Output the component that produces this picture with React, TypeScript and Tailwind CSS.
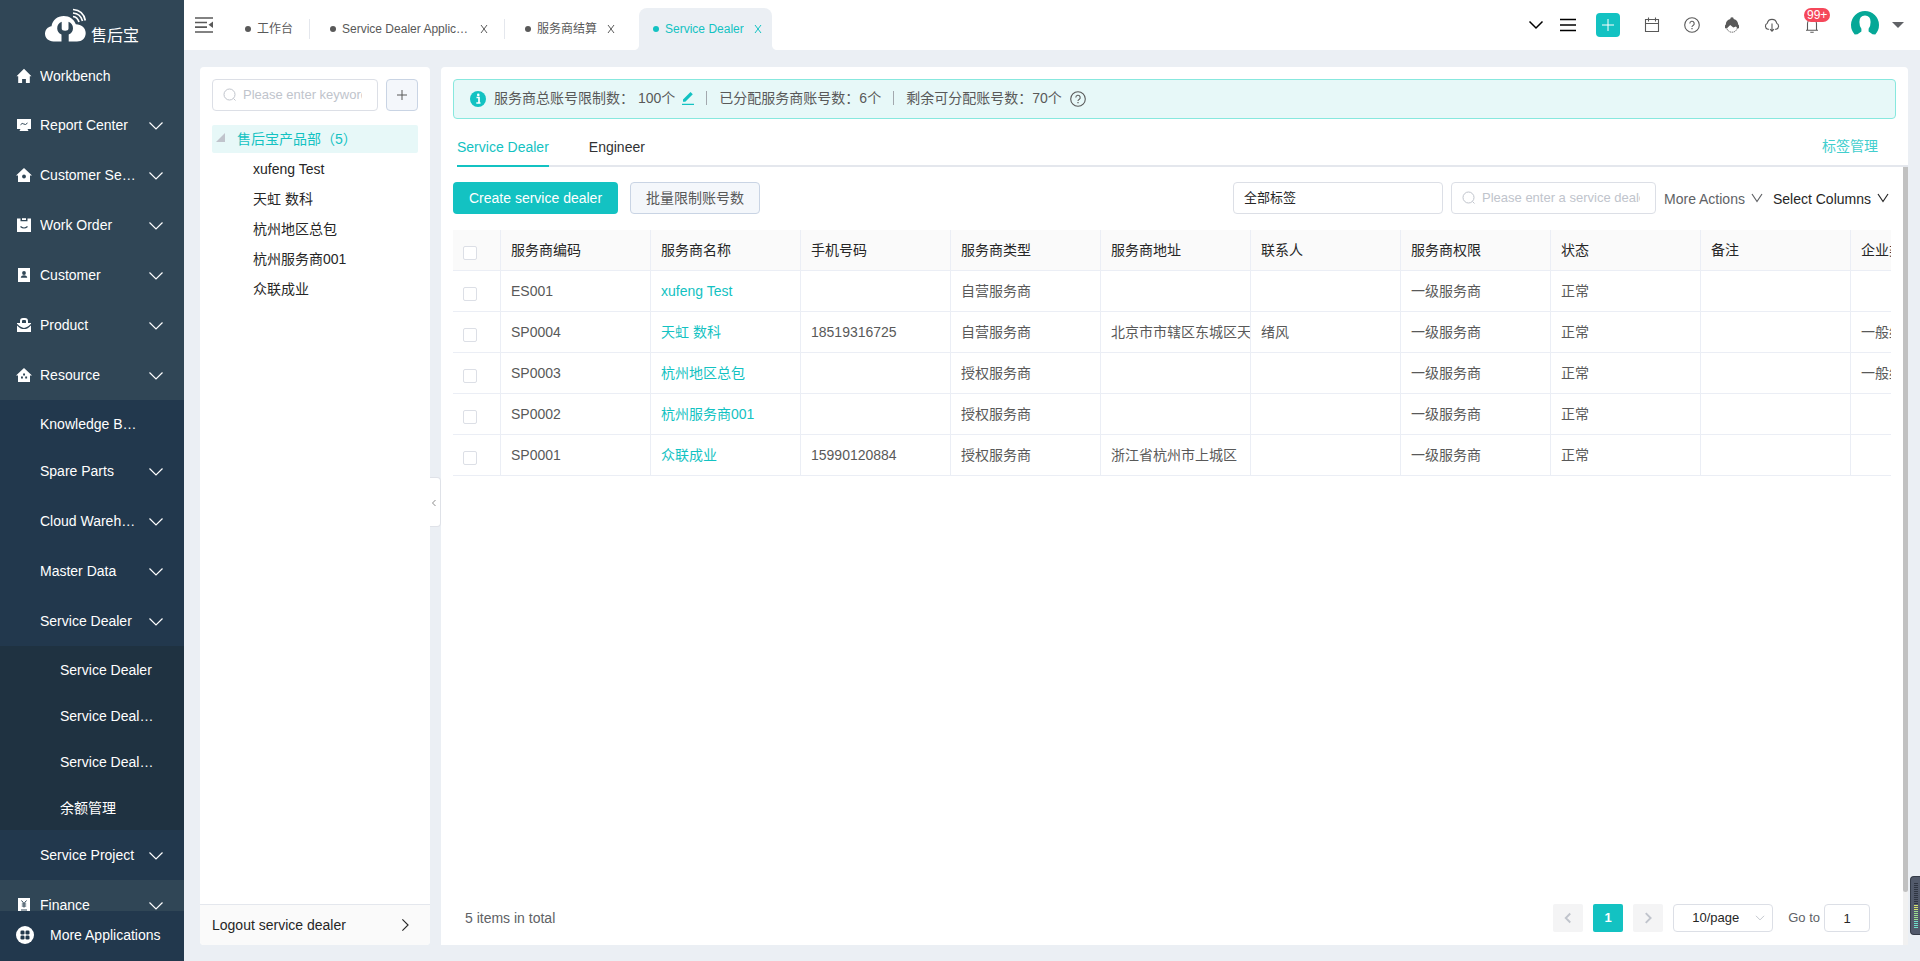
import React, { useState } from "react";

function Chevron({ dir = "down", className = "" }: { dir?: "down" | "left" | "right"; className?: string }) {
  const d = { down: "M1.5 4.5 8 11l6.5-6.5", left: "M11 2 5 8l6 6", right: "M5 1.500l6.500 6.500L5 14.500" }[dir];
  return (
    <svg viewBox="0 0 16 16" className={className} fill="none" stroke="currentColor" aria-hidden="true">
      <path d={d} />
    </svg>
  );
}

function Vee() {
  return (
    <svg viewBox="0 0 12 10" className="mb-0.5 ml-1.5 h-2.5 w-3" fill="none" stroke="currentColor" strokeWidth="1.200" aria-hidden="true">
      <path d="M1 1l5 7.500L11 1" />
    </svg>
  );
}

function Search() {
  return (
    <svg viewBox="0 0 14 14" className="size-3.5 shrink-0 text-[#c0c4cc]" fill="none" stroke="currentColor" aria-hidden="true">
      <circle cx="6.500" cy="6.500" r="5.500" />
      <path d="m10.500 10.500 2 2" />
    </svg>
  );
}

function Help({ className = "" }: { className?: string }) {
  return (
    <svg viewBox="0 0 16 16" className={className} fill="none" stroke="currentColor" aria-hidden="true">
      <circle cx="8" cy="8" r="7.300" strokeWidth="1.100" />
      <path d="M5.800 6.500a2.200 2.200 0 1 1 3.300 1.900C8.300 8.900 8 9.200 8 10" strokeWidth="1.100" />
      <path d="M8 11.100v1.200" strokeWidth="1.200" />
    </svg>
  );
}

const sideIcons: Record<string, React.ReactNode> = {
  home: <path fill="currentColor" d="M8 .8.500 8.200h1.700V15h3.900v-4h3.800v4h3.900V8.200h1.700z" />,
  report: (
    <>
      <path fill="currentColor" d="M1 2h14v10h-3.500l1 2h-9l1-2H1z" />
      <path d="M4.500 7.800q1.700-2.300 3.300-.8T11.500 6" fill="none" stroke="#304656" />
    </>
  ),
  service: (
    <>
      <path fill="currentColor" d="M8 1 0 8.500h2V15h12V8.500h2z" />
      <circle cx="8" cy="9.500" r="1.900" fill="#304656" />
    </>
  ),
  order: (
    <>
      <path fill="currentColor" d="M1 1.500h3.500v2.700h7V1.500H15V15H1z" />
      <path fill="currentColor" d="M6 1.200h4V3H6z" />
      <path d="M4.500 9.500q3.500 3 7 0" fill="none" stroke="#304656" strokeWidth="1.200" />
    </>
  ),
  customer: (
    <>
      <path fill="currentColor" d="M2 1h12v14H2z" />
      <circle cx="8" cy="6" r="1.900" fill="#304656" />
      <path d="M4.800 10.800q0-2.500 3.200-2.500t3.200 2.500z" fill="#304656" />
    </>
  ),
  product: (
    <>
      <path fill="currentColor" d="M1 6h14v9H1z" />
      <path d="M5 6V4a2 2 0 0 1 2-2h2a2 2 0 0 1 2 2v2" fill="none" stroke="currentColor" strokeWidth="2" />
      <path d="M1 7.500q7 8 14 0" fill="none" stroke="#304656" strokeWidth="1.200" />
    </>
  ),
  resource: (
    <>
      <path fill="currentColor" d="M8 1 0 8.500h2V15h12V8.500h2z" />
      <path fill="#304656" d="M7.100 6.500h1.900v1.900H7.100zM5 9.600h1.900v1.900H5zM9.200 9.600h1.900v1.900H9.200z" />
    </>
  ),
  finance: (
    <>
      <path fill="currentColor" d="M2 1h12v15H2z" />
      <path d="m5.500 3.500 2.500 3 2.500-3M8 6.500v4M5.800 7h4.400M5.800 9h4.400M5 13h6" fill="none" stroke="#304656" />
    </>
  ),
};

function MainItem({ icon, label, leaf = false }: { icon: string; label: string; leaf?: boolean }) {
  return (
    <a href="#" className={`flex shrink-0 items-center pl-4 pr-5 ${leaf ? "h-[46px] pb-0.5" : "h-[50px]"}`}>
      <svg viewBox="0 0 16 16" className="size-4 shrink-0" aria-hidden="true">
        {sideIcons[icon]}
      </svg>
      <span className="ml-2 w-[98px] truncate">{label}</span>
      {!leaf && <Chevron className="ml-auto mt-0.5 size-4 shrink-0 stroke-[1.2]" />}
    </a>
  );
}

function SubItem({ label, leaf = false }: { label: string; leaf?: boolean }) {
  return (
    <a href="#" className={`flex items-center pl-10 pr-5 ${leaf ? "h-[46px] pt-[2px]" : "h-[50px]"}`}>
      <span className="w-[98px] truncate">{label}</span>
      {!leaf && <Chevron className="ml-auto mt-0.5 size-4 shrink-0 stroke-[1.2]" />}
    </a>
  );
}

function Sidebar() {
  return (
    <aside className="flex w-[184px] shrink-0 flex-col bg-[#304656] text-sm text-white">
      <div className="flex h-[54px] shrink-0 items-start pl-11 pt-2">
        <svg viewBox="0 0 44 34" className="h-[34px] w-11 shrink-0" fill="currentColor" role="img" aria-label="Logo">
          <path d="M9.500 33.500C4.500 33.500 1 30 1 25.800c0-4 2.700-7 6.500-7.600C8.500 12 13.500 8 19.800 8c5.700 0 10.200 3.200 12 8.200 5.700.2 9.900 3.800 9.900 8.800 0 5-3.700 8.500-8.700 8.500h-8.300v-7c2.800-1.300 4.300-3.500 4.300-6.300 0-3-1.700-5.300-4.500-6.400v6.700c0 1.300-1.300 2.300-3.400 2.300s-3.400-1-3.400-2.300v-6.700c-2.800 1.100-4.500 3.400-4.500 6.400 0 2.800 1.500 5 4.300 6.300v7z" />
          <path d="M29 8.500q4.500.5 6 5.500M29 5q7.500.5 9.500 8M29 1.500q10.500.8 12.300 11" fill="none" stroke="currentColor" strokeWidth="1.700" />
        </svg>
        <span className="ml-[3px] mt-4 text-base leading-6">售后宝</span>
      </div>
      <nav className="flex min-h-0 flex-1 flex-col overflow-hidden">
        <MainItem icon="home" label="Workbench" leaf />
        <MainItem icon="report" label="Report Center" />
        <MainItem icon="service" label="Customer Service" />
        <MainItem icon="order" label="Work Order" />
        <MainItem icon="customer" label="Customer" />
        <MainItem icon="product" label="Product" />
        <MainItem icon="resource" label="Resource" />
        <div className="shrink-0 bg-[#22384d]">
          <SubItem label="Knowledge Base" leaf />
          <SubItem label="Spare Parts" />
          <SubItem label="Cloud Warehouse" />
          <SubItem label="Master Data" />
          <SubItem label="Service Dealer" />
          <div className="bg-[#1f3241]">
            {["Service Dealer", "Service Dealer Application", "Service Dealer Settlement", "余额管理"].map((t) => (
              <a key={t} href="#" className="flex h-[46px] items-center pl-[60px] pt-[2px]">
                <span className="w-24 truncate">{t}</span>
              </a>
            ))}
          </div>
          <SubItem label="Service Project" />
        </div>
        <MainItem icon="finance" label="Finance" />
      </nav>
      <a href="#" className="flex h-[50px] shrink-0 items-center bg-[#22384d] pb-0.5 pl-4">
        <svg viewBox="0 0 18 18" className="size-[18px]" aria-hidden="true">
          <circle cx="9" cy="9" r="9" fill="#fff" />
          <g fill="#22384d">
            <rect x="4.500" y="4.500" width="4" height="4" rx="1.300" />
            <rect x="9.500" y="4.500" width="4" height="4" rx="1.300" />
            <rect x="4.500" y="9.500" width="4" height="4" rx="1.300" />
            <rect x="9.500" y="9.500" width="4" height="4" rx="1.300" />
          </g>
        </svg>
        <span className="ml-4">More Applications</span>
      </a>
    </aside>
  );
}

function Close({ label }: { label: string }) {
  return (
    <button type="button" aria-label={label} className="ml-2.5 size-2">
      <svg viewBox="0 0 8 8" className="size-2" fill="none" stroke="currentColor" aria-hidden="true">
        <path d="M1 0l6 8M7 0 1 8" />
      </svg>
    </button>
  );
}

function TabLabel({ children, wide = false }: { children: string; wide?: boolean }) {
  return (
    <a href="#" className="flex items-center">
      <span className="size-1.5 rounded-full bg-current" />
      <span className={`ml-1.5 truncate ${wide ? "w-32" : ""}`}>{children}</span>
    </a>
  );
}

function Header() {
  return (
    <header className="flex h-[50px] shrink-0 items-center bg-white text-[#595959]">
      <button type="button" aria-label="Collapse menu" className="ml-[11px]">
        <svg viewBox="0 0 18 16" className="h-4 w-[18px]" fill="none" stroke="currentColor" strokeWidth="1.700" aria-hidden="true">
          <path d="M0 1h18M0 5.500h12M0 10.200h12M0 15h18" />
          <path d="M18 4.500v6.500L13.500 7.800z" fill="currentColor" stroke="none" />
        </svg>
      </button>
      <nav className="flex h-full items-end text-xs">
        <div className="flex h-[42px] items-center pl-8 pr-4">
          <TabLabel>工作台</TabLabel>
        </div>
        <div className="flex h-[42px] items-center">
          <div className="flex h-5 items-center border-l border-[#e4e7ed] pl-5 pr-4">
            <TabLabel wide>Service Dealer Application</TabLabel>
            <Close label="Close Service Dealer Application" />
          </div>
        </div>
        <div className="flex h-[42px] items-center">
          <div className="flex h-5 items-center border-l border-[#e4e7ed] pl-5 pr-6">
            <TabLabel>服务商结算</TabLabel>
            <Close label="Close 服务商结算" />
          </div>
        </div>
        <div className="relative flex h-[42px] items-center rounded-t-lg bg-[#ebeff4] pl-3.5 pr-2.5 text-[#13c2c2]">
          <svg viewBox="0 0 4 4" className="absolute -left-1 bottom-0 size-1 text-[#ebeff4]" aria-hidden="true"><path d="M4 0v4H0q3-.5 4-4" fill="currentColor" /></svg>
          <svg viewBox="0 0 4 4" className="absolute -right-1 bottom-0 size-1 text-[#ebeff4]" aria-hidden="true"><path d="M0 0v4h4Q1 3.500 0 0" fill="currentColor" /></svg>
          <TabLabel>Service Dealer</TabLabel>
          <Close label="Close Service Dealer" />
        </div>
      </nav>
      <div className="ml-auto flex items-center pr-4">
        <button type="button" aria-label="All tabs"><Chevron className="size-4 stroke-[1.5] text-black" /></button>
        <button type="button" aria-label="Menu" className="ml-4">
          <svg viewBox="0 0 16 14" className="h-3.5 w-4" stroke="#000" strokeWidth="1.700" aria-hidden="true"><path d="M0 1.500h16M0 7h16M0 12.500h16" /></svg>
        </button>
        <button type="button" aria-label="Create" className="ml-5 flex size-6 items-center justify-center rounded bg-[#13c2c2] text-white">
          <svg viewBox="0 0 12 12" className="size-3" stroke="currentColor" aria-hidden="true"><path d="M6 0v12M0 6h12" /></svg>
        </button>
        <button type="button" aria-label="Calendar" className="ml-6">
          <svg viewBox="0 0 16 16" className="size-4" fill="none" stroke="currentColor" strokeWidth="1.100" aria-hidden="true"><path d="M1.500 2.500h13v12h-13zM1.500 6.500h13M4.500.500v4M11.500.500v4" /></svg>
        </button>
        <button type="button" aria-label="Help" className="ml-6"><Help className="size-4" /></button>
        <button type="button" aria-label="Support" className="ml-6">
          <svg viewBox="0 0 16 16" className="size-4" aria-hidden="true">
            <path d="M2.200 9.500q1.300 5.700 5.800 5.700t5.800-5.700" fill="none" stroke="currentColor" strokeWidth=".900" strokeDasharray="1.500 .600" />
            <path d="M8 .2c1.300 0 1.800 1 1.600 1.900 3 .7 4.500 3 4.600 5.400l.8 1v2.700h-1.700L12 9.500 9.300 10.500 6.200 8 3 11.200H1V8.500l.8-1C1.900 5 3.400 2.800 6.400 2.100 6.200 1.200 6.700.2 8 .2" fill="currentColor" />
          </svg>
        </button>
        <button type="button" aria-label="Downloads" className="ml-6">
          <svg viewBox="0 0 16 16" className="size-4" fill="none" stroke="currentColor" strokeWidth="1.100" aria-hidden="true"><path d="M5 12.200H3.800A3.200 3.200 0 0 1 3.300 6.200 4.800 4.800 0 0 1 12.700 6.200a3.200 3.200 0 0 1-.5 6H11M8 6.500v7.500M6 12.200 8 14.200l2-2" /></svg>
        </button>
        <button type="button" aria-label="Notifications" className="relative ml-6">
          <svg viewBox="0 0 16 16" className="size-4" fill="none" stroke="currentColor" strokeWidth="1.100" aria-hidden="true"><path d="M3.500 13V6.500a4.500 4.500 0 0 1 9 0V13M2 13.300h12M6.300 15.200h3.400M8 2V.5" /></svg>
          <span className="absolute -top-[9px] left-0 rounded-full bg-[#f5475a] px-[3px] text-xs leading-3.5 text-white">99+</span>
        </button>
        <button type="button" aria-label="Account" className="ml-[30px] flex items-center">
          <svg viewBox="0 0 30 30" className="size-[30px]" aria-hidden="true">
            <path d="M4.700 24.500A14 14 0 1 1 25.300 24.500L22.500 24.300 18.600 21.500V18.700Q20.600 16.500 20.600 12 20.600 5.500 15 5.500T9.400 12Q9.400 16.500 11.400 18.700V21.500L7.500 24.300z" fill="#05a897" />
          </svg>
          <svg viewBox="0 0 12 6" className="ml-3 h-1.5 w-3" aria-hidden="true"><path d="M0 0h12L6 6z" fill="#606266" /></svg>
        </button>
      </div>
    </header>
  );
}

function TreePanel() {
  return (
    <section className="relative flex w-[230px] shrink-0 flex-col rounded bg-white text-sm text-[#262626]">
      <div className="flex gap-2 px-3 pt-3">
        <label className="flex h-8 w-[166px] items-center gap-1.5 rounded border border-[#dcdfe6] px-2.5">
          <Search />
          <input aria-label="Keyword" placeholder="Please enter keyword" className="w-[119px] text-[13px] outline-none placeholder:text-[#c0c4cc]" />
        </label>
        <button type="button" aria-label="Add" className="flex size-8 items-center justify-center rounded border border-[#c9d4e4] bg-[#f4f7fb] text-[#595959]">
          <svg viewBox="0 0 10 10" className="size-2.5" stroke="currentColor" aria-hidden="true"><path d="M5 0v10M0 5h10" /></svg>
        </button>
      </div>
      <ul className="mt-3.5 flex flex-col gap-0.5 px-3">
        <li>
          <a href="#" className="flex h-7 items-center rounded-xs bg-[#e7f8f8] pl-1 text-[#13c2c2]">
            <svg viewBox="0 0 9 9" className="mb-1 size-[9px]" aria-hidden="true"><path d="M9 0v9H0z" fill="#c0c4cc" /></svg>
            <span className="ml-3">售后宝产品部（5）</span>
          </a>
        </li>
        {["xufeng Test", "天虹 数科", "杭州地区总包", "杭州服务商001", "众联成业"].map((t) => (
          <li key={t}><a href="#" className="flex h-7 items-center pl-[41px]">{t}</a></li>
        ))}
      </ul>
      <a href="#" className="mt-auto flex h-[41px] items-center justify-between rounded-b border-t border-[#e4e7ed] bg-[#fafafa] pl-3 pr-[18px]">
        Logout service dealer
        <Chevron dir="right" className="size-3.5 stroke-[1.3]" />
      </a>
      <button type="button" aria-label="Collapse panel" className="absolute left-full top-[410px] flex h-[50px] w-[11px] items-center justify-start rounded-r border border-l-0 border-[#dfe2e8] bg-white pt-0.5 text-[#8c8c8c]">
        <Chevron dir="left" className="size-2 stroke-2" />
      </button>
    </section>
  );
}

const headers = ["服务商编码", "服务商名称", "手机号码", "服务商类型", "服务商地址", "联系人", "服务商权限", "状态", "备注", "企业类型"];
const rows = [
  ["ES001", "xufeng Test", "", "自营服务商", "", "", "一级服务商", "正常", "", ""],
  ["SP0004", "天虹 数科", "18519316725", "自营服务商", "北京市市辖区东城区天", "绪风", "一级服务商", "正常", "", "一般纳税人"],
  ["SP0003", "杭州地区总包", "", "授权服务商", "", "", "一级服务商", "正常", "", "一般纳税人"],
  ["SP0002", "杭州服务商001", "", "授权服务商", "", "", "一级服务商", "正常", "", ""],
  ["SP0001", "众联成业", "15990120884", "授权服务商", "浙江省杭州市上城区", "", "一级服务商", "正常", "", ""],
];

function Check({ label }: { label: string }) {
  return <input type="checkbox" aria-label={label} className="mt-1.5 block size-3.5 appearance-none rounded-xs border border-[#dcdfe6] bg-white checked:bg-[#13c2c2]" />;
}

function DealerTable() {
  return (
    <div className="mr-[5px] mt-4 overflow-hidden">
      <table className="w-[1548px] table-fixed border-separate border-spacing-0 text-left text-sm text-[#595959]">
        <colgroup>
          <col className="w-12" />
          {headers.map((h) => <col key={h} className="w-[150px]" />)}
        </colgroup>
        <thead>
          <tr className="h-[41px] bg-[#fafafa] text-[#262626]">
            <th className="border-b border-r border-[#ebeef5] pl-2.5"><Check label="Select all" /></th>
            {headers.map((h) => <th key={h} className="overflow-hidden whitespace-nowrap border-b border-r border-[#ebeef5] pl-2.5 font-normal">{h}</th>)}
          </tr>
        </thead>
        <tbody>
          {rows.map((r) => (
            <tr key={r[0]} className="h-[41px]">
              <td className="border-b border-r border-[#ebeef5] pl-2.5"><Check label={`Select ${r[0]}`} /></td>
              {r.map((c, i) => (
                <td key={i} className="overflow-hidden whitespace-nowrap border-b border-r border-[#ebeef5] pl-2.5">
                  {i === 1 ? <a href="#" className="text-[#13c2c2]">{c}</a> : c}
                </td>
              ))}
            </tr>
          ))}
        </tbody>
      </table>
    </div>
  );
}

function Pagination() {
  const [page, setPage] = useState("1");
  return (
    <footer className="mt-auto flex items-center pb-[13px] pl-3 pr-[26px] text-[13px] text-[#606266]">
      <span className="text-sm">5 items in total</span>
      <div className="ml-auto flex items-center">
        <button type="button" aria-label="Previous page" className="flex h-7 w-[30px] items-center justify-center rounded-xs bg-[#f4f4f5] text-[#c0c4cc]"><Chevron dir="left" className="size-3 stroke-[2.5]" /></button>
        <button type="button" className="ml-2.5 h-7 w-[30px] rounded-xs bg-[#13c2c2] font-bold text-white">1</button>
        <button type="button" aria-label="Next page" className="ml-2.5 flex h-7 w-[30px] items-center justify-center rounded-xs bg-[#f4f4f5] text-[#c0c4cc]"><Chevron dir="right" className="size-3 stroke-[2.5]" /></button>
        <div className="ml-2.5 grid items-center">
          <select aria-label="Page size" className="col-start-1 row-start-1 h-7 w-[100px] appearance-none rounded border border-[#dcdfe6] pl-[18px] text-[#262626]">
            <option>10/page</option>
            <option>20/page</option>
          </select>
          <Chevron className="pointer-events-none col-start-1 row-start-1 mr-2 size-2.5 justify-self-end stroke-[1.5] text-[#c0c4cc]" />
        </div>
        <label htmlFor="goto" className="ml-[15px]">Go to</label>
        <input id="goto" value={page} onChange={(e) => setPage(e.target.value)} className="ml-1 h-7 w-[46px] rounded border border-[#dcdfe6] text-center text-[#262626]" />
      </div>
    </footer>
  );
}

function DealerPanel() {
  return (
    <section className="flex min-w-0 flex-1 flex-col rounded-t bg-white text-sm">
      <div className="mx-3 mt-3 flex h-10 items-center rounded border border-[#87e8de] bg-[#e7f8f8] pb-0.5 pl-4 text-[#595959]">
        <svg viewBox="0 0 16 16" className="mt-0.5 size-4" aria-hidden="true">
          <circle cx="8" cy="8" r="8" fill="#13c2c2" />
          <path d="M6.500 6.500H9V12M6.300 12h4.200" fill="none" stroke="#fff" strokeWidth="1.700" />
          <circle cx="8.300" cy="3.900" r="1.300" fill="#fff" />
        </svg>
        <span className="ml-2">服务商总账号限制数：</span>
        <span className="ml-1">100个</span>
        <button type="button" aria-label="Edit limit" className="ml-[7px] text-[#13c2c2]">
          <svg viewBox="0 0 12 14" className="h-3.5 w-3" fill="currentColor" aria-hidden="true"><path d="M0 12.700h12V14H0zM1 8.500 8.500 1l2.300 2.300-7.500 7.500H1z" /></svg>
        </button>
        <span className="mx-3 h-3.5 w-px bg-[#a3a8ae]" />
        <span>已分配服务商账号数：6个</span>
        <span className="mx-3 h-3.5 w-px bg-[#a3a8ae]" />
        <span>剩余可分配账号数：70个</span>
        <Help className="ml-2 mt-0.5 size-4" />
      </div>
      <div className="ml-4 flex h-12 items-stretch border-b-2 border-[#e4e7ed]">
        <a href="#" className="-mb-0.5 flex items-center border-b-2 border-[#13c2c2] pt-2.5 text-[#13c2c2]">Service Dealer</a>
        <a href="#" className="ml-10 flex items-center pt-2.5 text-[#303133]">Engineer</a>
        <a href="#" className="ml-auto mr-[30px] flex items-center pt-2 text-[#42cece]">标签管理</a>
      </div>
      <div className="flex min-h-0 flex-1">
        <div className="flex min-w-0 flex-1 flex-col pl-3 pr-[7px] pt-[15px]">
          <div className="flex items-center">
            <button type="button" className="h-8 rounded bg-[#13c2c2] px-4 text-white">Create service dealer</button>
            <button type="button" className="ml-3 h-8 rounded border border-[#c9d4e4] bg-[#f4f7fb] px-[15px] text-[#595959]">批量限制账号数</button>
            <select aria-label="Tag filter" className="ml-auto h-8 w-[210px] appearance-none rounded border border-[#dcdfe6] px-2.5 text-[13px] text-[#262626]">
              <option>全部标签</option>
            </select>
            <label className="ml-2 flex h-8 w-[205px] items-center gap-1.5 rounded border border-[#dcdfe6] px-2.5">
              <Search />
              <input aria-label="Service dealer" placeholder="Please enter a service dealer" className="w-[158px] text-[13px] outline-none placeholder:text-[#c0c4cc]" />
            </label>
            <button type="button" className="ml-2 flex items-center pt-0.5 text-[#606266]">More Actions<Vee /></button>
            <button type="button" className="ml-2.5 mr-[7px] flex items-center pt-0.5 text-[#262626]">Select Columns<Vee /></button>
          </div>
          <DealerTable />
          <Pagination />
        </div>
        <div className="flex w-[5px] shrink-0 flex-col bg-[#f1f1f1]" aria-hidden="true">
          <div className="mb-[53px] flex-1 rounded-b bg-[#c1c1c1]" />
        </div>
      </div>
    </section>
  );
}

export default function App() {
  return (
    <div className="relative flex h-screen overflow-hidden font-['Liberation_Sans','Noto_Sans_CJK_SC',sans-serif]">
      <Sidebar />
      <div className="flex min-w-0 flex-1 flex-col bg-[#ebeff4]">
        <Header />
        <main className="flex min-h-0 flex-1 gap-[11px] pb-4 pl-4 pr-3 pt-[17px]">
          <TreePanel />
          <DealerPanel />
        </main>
      </div>
      <div className="absolute bottom-[26px] right-0 flex h-[59px] w-2.5 flex-col items-end justify-center gap-px rounded-l border border-r-0 border-[#343b48] bg-[#525a6b] pr-0.5" aria-hidden="true">
        <svg viewBox="0 0 4 46" className="h-[46px] w-1">
          {Array.from({ length: 23 }, (_, i) => (
            <rect key={i} x="0" y={i * 2} width="4" height="1" fill={i < 11 ? "#2f3542" : i < 14 ? "#d4e36a" : i < 19 ? "#9be08f" : "#6fe0c8"} />
          ))}
        </svg>
      </div>
    </div>
  );
}
